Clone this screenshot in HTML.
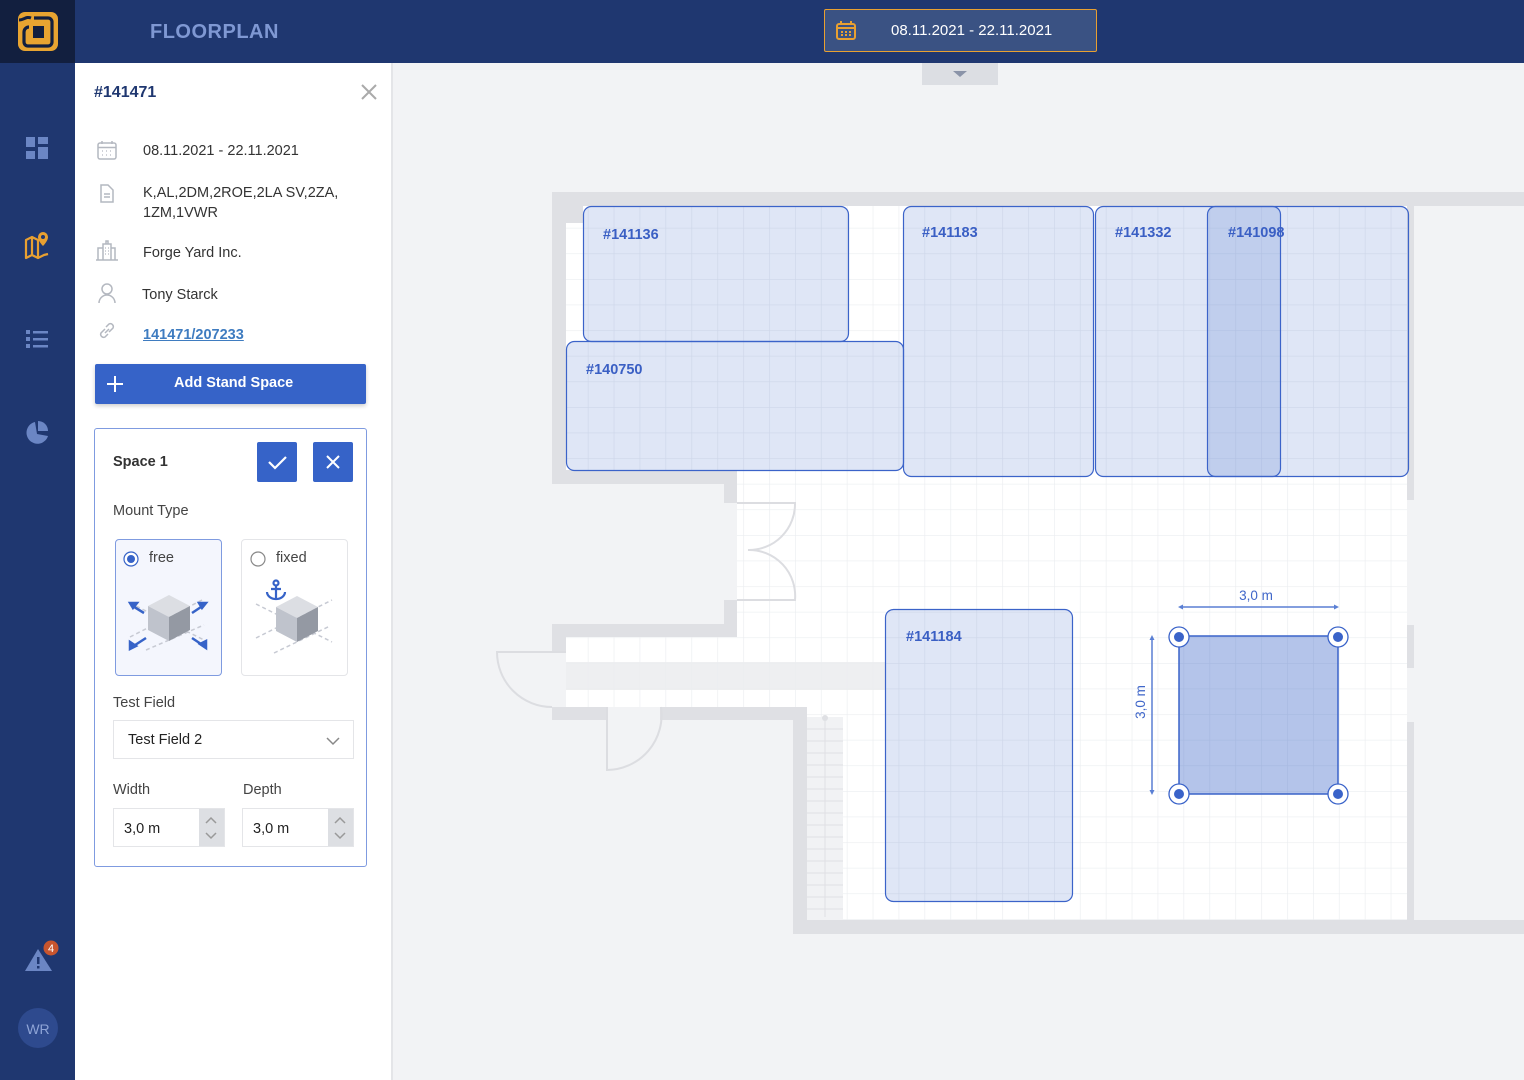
<!DOCTYPE html>
<html><head><meta charset="utf-8">
<style>
*{box-sizing:border-box;margin:0;padding:0}
body{width:1524px;height:1080px;overflow:hidden;background:#f2f3f5;font-family:"Liberation Sans",sans-serif;position:relative}
.abs{position:absolute}
#side{left:0;top:0;width:75px;height:1080px;background:#1f3770}
#logo{left:0;top:0;width:75px;height:63px;background:#121f3f}
#top{left:75px;top:0;width:1449px;height:63px;background:#1f3770}
#panel{left:75px;top:63px;width:318px;height:1017px;background:#fff;border-right:2px solid #e4e5e8}
.t{position:absolute;font-size:14.5px;color:#333}
.lbl{position:absolute;font-size:14.5px;color:#444}
</style></head><body>
<div id="side" class="abs"></div>
<div id="logo" class="abs">
<svg width="75" height="63"><rect x="18" y="12" width="40" height="39" rx="7" fill="#e8a431"/>
<path d="M34 18 H48 a4 4 0 0 1 4 4 V42 a4 4 0 0 1 -4 4 H28 a4 4 0 0 1 -4 -4 V32 a5 5 0 0 1 5 -5" fill="none" stroke="#121f3f" stroke-width="3.2"/>
<path d="M19 20 C24 20 26 16 31 18" fill="none" stroke="#121f3f" stroke-width="3"/>
<rect x="33" y="26" width="11" height="12" fill="#121f3f"/></svg>
</div>
<div id="top" class="abs">
<div class="abs" style="left:75px;top:21px;font-size:20px;font-weight:bold;color:#7f98d3;letter-spacing:0.5px">FLOORPLAN</div>
<div class="abs" style="left:749px;top:9px;width:273px;height:43px;background:#3a5283;border:1.5px solid #e8a031;border-radius:2px">
<svg class="abs" style="left:10px;top:11px" width="22" height="20"><rect x="2" y="3" width="18" height="15" rx="2" fill="none" stroke="#e8a031" stroke-width="2"/><line x1="2" y1="7" x2="20" y2="7" stroke="#e8a031" stroke-width="2"/><line x1="6" y1="0" x2="6" y2="4" stroke="#e8a031" stroke-width="2"/><line x1="16" y1="0" x2="16" y2="4" stroke="#e8a031" stroke-width="2"/><g fill="#e8a031"><rect x="6" y="10" width="2" height="2"/><rect x="10" y="10" width="2" height="2"/><rect x="14" y="10" width="2" height="2"/><rect x="6" y="13" width="2" height="2"/><rect x="10" y="13" width="2" height="2"/><rect x="14" y="13" width="2" height="2"/></g></svg>
<div class="abs" style="left:66px;top:12px;font-size:15px;color:#fff">08.11.2021 - 22.11.2021</div>
</div>
</div>
<svg class="abs" style="left:0;top:120px" width="75" height="340">
<g fill="#6b86c4"><rect x="26" y="17" width="9" height="10"/><rect x="38" y="17" width="10" height="7"/><rect x="26" y="31" width="9" height="8"/><rect x="38" y="27" width="10" height="12"/></g>
<g fill="none" stroke="#e8a031" stroke-width="2.2" stroke-linejoin="round"><path d="M26 138 L26 120 L32 117 L38 120 L38 138 L32 135 Z M32 117 L32 135"/><path d="M38 138 L44 135 L48 134"/></g>
<path d="M43 112 a5 5 0 0 1 5 5 c0 4 -5 9 -5 9 c0 0 -5 -5 -5 -9 a5 5 0 0 1 5 -5z" fill="#e8a031"/><circle cx="43" cy="117" r="2" fill="#1f3770"/>
<g fill="#6b86c4"><rect x="26" y="210" width="4" height="4"/><rect x="33" y="211" width="15" height="2.5"/><rect x="26" y="217" width="4" height="4"/><rect x="33" y="218" width="15" height="2.5"/><rect x="26" y="224" width="4" height="4"/><rect x="33" y="225" width="15" height="2.5"/></g>
<path d="M35 302 A11 11 0 1 0 48 316 L37 314 Z" fill="#6b86c4"/><path d="M38 301 A10 10 0 0 1 48 311 L38 311Z" fill="#6b86c4"/>
</svg>
<svg class="abs" style="left:0;top:930px" width="75" height="130">
<path d="M25 41 L38 19 L52 41 Z" fill="#6b86c4"/><rect x="37" y="27" width="2.5" height="7" fill="#1f3770"/><rect x="37" y="36" width="2.5" height="2.5" fill="#1f3770"/>
<circle cx="51" cy="18" r="7.5" fill="#c8552e"/><text x="51" y="22" font-size="11" fill="#fff" text-anchor="middle" font-family="Liberation Sans">4</text>
<circle cx="38" cy="98" r="20" fill="#2e4a8e"/><text x="38" y="104" font-size="14" fill="#8ea4d6" text-anchor="middle" font-family="Liberation Sans">WR</text>
</svg>

<div id="panel" class="abs">
<div class="abs" style="left:19px;top:21px;font-size:16px;font-weight:bold;color:#1f3770">#141471</div>
<svg class="abs" style="left:285px;top:20px" width="18" height="18"><path d="M2 2 L16 16 M16 2 L2 16" stroke="#aaa" stroke-width="2"/></svg>
<svg class="abs" style="left:20px;top:76px" width="30" height="210" fill="none" stroke="#b4b8c0" stroke-width="1.5">
<rect x="3" y="4" width="18" height="16" rx="2"/><line x1="3" y1="8.5" x2="21" y2="8.5"/><line x1="7" y1="2" x2="7" y2="5"/><line x1="17" y1="2" x2="17" y2="5"/><g stroke-width="1.3"><path d="M7 12h1M11 12h1M15 12h1M7 16h1M11 16h1M15 16h1"/></g>
<path d="M6 46 h7 l5 5 v12 h-12z"/><path d="M9 55h6M9 58h6"/>
<path d="M1 121 h22 M3 121 v-12 h5 v12 M8 121 v-16 h8 v16 M16 109 h4 v12 M11 105 v-3 h2 v3"/><path d="M10 109h1M13 109h1M10 112h1M13 112h1M10 115h1M13 115h1" stroke-width="1.2"/>
<circle cx="12" cy="150" r="5"/><path d="M4 164 a8 8 0 0 1 16 0"/>
<path d="M10 190 l-4 4 a3 3 0 0 0 4 4 l3 -3 M14 193 l4 -4 a3 3 0 0 0 -4 -4 l-3 3 M10 194 l4 -4"/>
</svg>
<div class="t" style="left:68px;top:80px">08.11.2021 - 22.11.2021</div>
<div class="t" style="left:68px;top:120px;line-height:20px">K,AL,2DM,2ROE,2LA SV,2ZA,<br>1ZM,1VWR</div>
<div class="t" style="left:68px;top:182px">Forge Yard Inc.</div>
<div class="t" style="left:67px;top:224px">Tony Starck</div>
<div class="t" style="left:68px;top:264px;color:#3f7cc0;font-weight:bold;text-decoration:underline">141471/207233</div>
<div class="abs" style="left:20px;top:301px;width:271px;height:40px;background:#3663c8;border-radius:2px;box-shadow:0 2px 4px rgba(0,0,0,.2)">
<svg class="abs" style="left:12px;top:12px" width="16" height="16"><path d="M8 0v16M0 8h16" stroke="#fff" stroke-width="2"/></svg>
<div class="abs" style="left:79px;top:11px;color:#fff;font-weight:bold;font-size:14.5px">Add Stand Space</div>
</div>
<div class="abs" style="left:19px;top:365px;width:273px;height:439px;border:1.5px solid #7f9be0;border-radius:3px">
<div class="abs" style="left:18px;top:25px;font-weight:bold;font-size:14.5px;color:#333">Space 1</div>
<div class="abs" style="left:162px;top:13px;width:40px;height:40px;background:#3663c8;border-radius:2px"><svg width="40" height="40"><path d="M12 20 l6 6 l11 -11" stroke="#fff" stroke-width="2.2" fill="none"/></svg></div>
<div class="abs" style="left:218px;top:13px;width:40px;height:40px;background:#3663c8;border-radius:2px"><svg width="40" height="40"><path d="M14 14 L26 26 M26 14 L14 26" stroke="#fff" stroke-width="2"/></svg></div>
<div class="lbl" style="left:18px;top:74px">Mount Type</div>
<div class="abs" style="left:20px;top:110px;width:107px;height:137px;background:#f4f6fd;border:1.5px solid #7f9be0;border-radius:4px">
<svg class="abs" style="left:7px;top:11px" width="18" height="18"><circle cx="8" cy="8" r="7" fill="#fff" stroke="#3663c8" stroke-width="1.2"/><circle cx="8" cy="8" r="4" fill="#3663c8"/></svg>
<div class="t" style="left:33px;top:10px;color:#444">free</div>
<svg class="abs" style="left:0;top:45px" width="105" height="80">
<g stroke="#c7cad3" stroke-width="1.5" stroke-dasharray="4 3"><path d="M14 52 L88 14 M14 18 L90 56 M30 65 L88 40"/></g>
<path d="M53 10 L74 21 L53 32 L32 21Z" fill="#dcdee3"/><path d="M32 21 L53 32 L53 56 L32 45Z" fill="#bfc3cc"/><path d="M74 21 L53 32 L53 56 L74 45Z" fill="#9499a3"/>
<g stroke="#3663c8" stroke-width="2.5" fill="#3663c8"><path d="M15 20 L28 28"/><path d="M14 18 l7 0 l-4 5z"/><path d="M76 28 L88 20"/><path d="M90 18 l-7 0 l3 5z"/><path d="M16 62 L30 53"/><path d="M14 64 l0-7 l6 4z"/><path d="M76 53 L88 61"/><path d="M90 63 l0 -7 l-6 3z"/></g>
</svg>
</div>
<div class="abs" style="left:146px;top:110px;width:107px;height:137px;background:#fff;border:1.5px solid #e4e5e8;border-radius:4px">
<svg class="abs" style="left:8px;top:11px" width="18" height="18"><circle cx="8" cy="8" r="7" fill="#fff" stroke="#888" stroke-width="1.2"/></svg>
<div class="t" style="left:34px;top:10px;color:#444">fixed</div>
<svg class="abs" style="left:0;top:38px" width="105" height="85">
<g stroke="#3663c8" stroke-width="2.2" fill="none"><circle cx="34" cy="5" r="2.5"/><path d="M34 8 v12 M29 11 h10 M25 14 a9 7 0 0 0 18 0"/></g>
<g stroke="#c7cad3" stroke-width="1.5" stroke-dasharray="4 3"><path d="M14 60 L90 22 M14 26 L90 64 M32 75 L88 48"/></g>
<path d="M55 18 L76 29 L55 40 L34 29Z" fill="#dcdee3"/><path d="M34 29 L55 40 L55 64 L34 53Z" fill="#bfc3cc"/><path d="M76 29 L55 40 L55 64 L76 53Z" fill="#9499a3"/>
</svg>
</div>
<div class="lbl" style="left:18px;top:266px">Test Field</div>
<div class="abs" style="left:18px;top:291px;width:241px;height:39px;border:1.5px solid #e4e5e8;background:#fff">
<div class="t" style="left:14px;top:11px;color:#222">Test Field 2</div>
<svg class="abs" style="left:212px;top:15px" width="14" height="10"><path d="M1 2 l6 6 l6 -6" stroke="#888" stroke-width="1.5" fill="none"/></svg>
</div>
<div class="lbl" style="left:18px;top:353px">Width</div>
<div class="lbl" style="left:148px;top:353px">Depth</div>
<div class="abs" style="left:18px;top:379px;width:112px;height:39px;border:1.5px solid #e4e5e8;background:#fff">
<div class="t" style="left:10px;top:12px;color:#222">3,0 m</div>
<div class="abs" style="left:85px;top:0;width:25px;height:37px;background:#dddfe3"><svg width="25" height="37"><path d="M7 14 l5 -5 l5 5 M7 24 l5 5 l5 -5" stroke="#999" stroke-width="1.5" fill="none"/></svg></div>
</div>
<div class="abs" style="left:147px;top:379px;width:112px;height:39px;border:1.5px solid #e4e5e8;background:#fff">
<div class="t" style="left:10px;top:12px;color:#222">3,0 m</div>
<div class="abs" style="left:85px;top:0;width:25px;height:37px;background:#dddfe3"><svg width="25" height="37"><path d="M7 14 l5 -5 l5 5 M7 24 l5 5 l5 -5" stroke="#999" stroke-width="1.5" fill="none"/></svg></div>
</div>
</div>
</div>

<div class="abs" style="left:922px;top:63px;width:76px;height:22px;background:#dcdee3"><svg width="76" height="22"><path d="M31 8 h14 l-7 6z" fill="#8a93a8"/></svg></div>

<svg class="abs" style="left:395px;top:85px" width="1129" height="995" viewBox="395 85 1129 995" font-family="Liberation Sans">
<defs>
<pattern id="g" x="18" y="23" width="25.9" height="25.6" patternUnits="userSpaceOnUse"><path d="M0 0 V25.6 M0 0 H25.9" stroke="#ebedf0" stroke-width="1.3" fill="none"/></pattern>
</defs>
<rect x="1414" y="206" width="110" height="715" fill="#f2f3f5"/>
<path d="M566 223 H583 V206 H1407 V920 H807 V707 H566 V637 H737 V470 H566Z" fill="#fff"/>
<rect x="566" y="662" width="320" height="28" fill="#eeeff1"/>
<path d="M566 223 H583 V206 H1407 V920 H807 V707 H566 V637 H737 V470 H566Z" fill="url(#g)"/>
<g fill="#dfe0e4">
<rect x="552" y="192" width="972" height="14"/>
<rect x="552" y="192" width="14" height="292"/>
<rect x="566" y="206" width="17" height="17"/>
<rect x="552" y="470" width="185" height="14"/>
<rect x="724" y="470" width="13" height="33"/>
<rect x="724" y="600" width="13" height="37"/>
<rect x="552" y="624" width="185" height="13"/>
<rect x="552" y="624" width="14" height="28"/>
<rect x="552" y="707" width="55" height="13"/>
<rect x="660" y="707" width="147" height="13"/>
<rect x="793" y="707" width="14" height="227"/>
<rect x="793" y="920" width="731" height="14"/>
<rect x="1407" y="206" width="7" height="294"/>
<rect x="1407" y="625" width="7" height="43"/>
<rect x="1407" y="722" width="7" height="198"/>
</g>
<g fill="none" stroke="#dcdde1" stroke-width="2">
<path d="M737 503 H795 A46 46 0 0 1 748 550 A46 46 0 0 1 795 600 H737"/>
<path d="M566 652 H497 A55 55 0 0 0 552 707"/>
<path d="M607 707 V770 A55 55 0 0 0 661 707"/>
</g>
<rect x="807" y="717" width="36" height="203" fill="#f1f2f4"/>
<g stroke="#dfe0e4" stroke-width="1"><path d="M807 729h36M807 741h36M807 753h36M807 765h36M807 777h36M807 789h36M807 801h36M807 813h36M807 825h36M807 837h36M807 849h36M807 861h36M807 873h36M807 885h36M807 897h36M807 909h36M825 717v200"/></g>
<circle cx="825" cy="718" r="3" fill="#dfe0e4"/>
<g fill="rgba(58,99,201,0.16)" stroke="#3b63c9" stroke-width="1.2">
<rect x="583.5" y="206.5" width="265" height="135" rx="8"/>
<rect x="566.5" y="341.5" width="337" height="129" rx="8"/>
<rect x="903.5" y="206.5" width="190" height="270" rx="8"/>
<rect x="1095.5" y="206.5" width="313" height="270" rx="8"/>
<rect x="1207.5" y="206.5" width="73" height="270" rx="8" fill="rgba(58,99,201,0.18)"/>
<rect x="885.5" y="609.5" width="187" height="292" rx="8"/>
</g>
<g fill="#3a5fc4" font-size="14.5" font-weight="bold">
<text x="603" y="239">#141136</text>
<text x="586" y="374">#140750</text>
<text x="922" y="237">#141183</text>
<text x="1115" y="237">#141332</text>
<text x="1228" y="237">#141098</text>
<text x="906" y="641">#141184</text>
</g>
<rect x="1179" y="636" width="159" height="158" fill="rgba(58,99,201,0.38)" stroke="#3a63c9" stroke-width="1.5"/>
<g stroke="#5a7fd4" stroke-width="1.5" fill="#5a7fd4">
<path d="M1180 607 H1337"/><path d="M1178 607 l5 -2.5 v5z M1339 607 l-5 -2.5 v5z" stroke="none"/>
<path d="M1152 637 V793"/><path d="M1152 635 l-2.5 5 h5z M1152 795 l-2.5 -5 h5z" stroke="none"/>
</g>
<text x="1256" y="600" font-size="13.5" fill="#3f66c9" text-anchor="middle">3,0 m</text>
<text transform="translate(1145 702) rotate(-90)" font-size="13.5" fill="#3f66c9" text-anchor="middle">3,0 m</text>
<g fill="#fff" stroke="#3a63c9" stroke-width="1.3">
<circle cx="1179" cy="637" r="10"/><circle cx="1338" cy="637" r="10"/><circle cx="1179" cy="794" r="10"/><circle cx="1338" cy="794" r="10"/>
</g>
<g fill="#3a63c9"><circle cx="1179" cy="637" r="5"/><circle cx="1338" cy="637" r="5"/><circle cx="1179" cy="794" r="5"/><circle cx="1338" cy="794" r="5"/></g>
</svg>
</body></html>
